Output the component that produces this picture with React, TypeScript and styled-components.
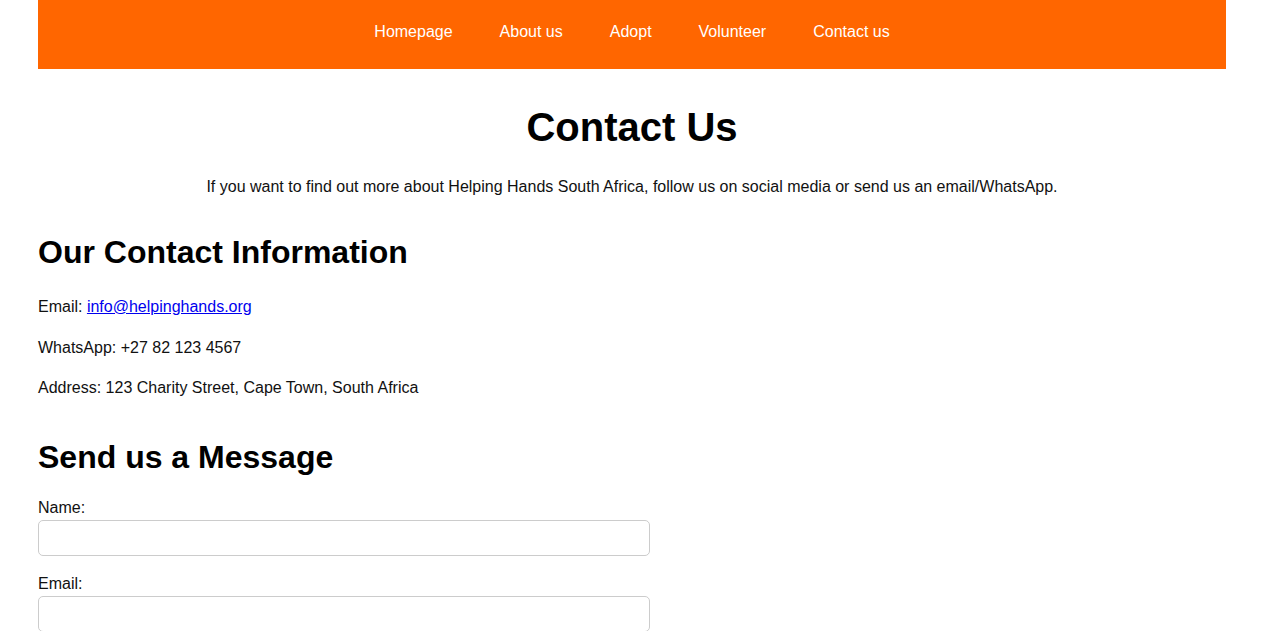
import React from 'react';
import styled, { createGlobalStyle } from 'styled-components';

const GlobalStyle = createGlobalStyle`
  html, body {
    margin: 0;
    padding: 0;
    background: #ffffff;
  }
  body {
    font-family: "Liberation Sans", Arial, Helvetica, sans-serif;
    color: #111;
  }
  * {
    box-sizing: border-box;
  }
`;

const navItems = ['Homepage', 'About us', 'Adopt', 'Volunteer', 'Contact us'];

function App() {
  return (
    <>
      <GlobalStyle />
      <Page>
        <NavBar>
          {navItems.map((item) => (
            <NavLink key={item} href="#">
              {item}
            </NavLink>
          ))}
        </NavBar>
        <Main>
          <Title>Contact Us</Title>
          <Intro>
            If you want to find out more about Helping Hands South Africa, follow us on social
            media or send us an email/WhatsApp.
          </Intro>

          <Section>
            <SectionHeading>Our Contact Information</SectionHeading>
            <InfoList>
              <InfoLine>
                Email: <MailLink href="#">info@helpinghands.org</MailLink>
              </InfoLine>
              <InfoLine>WhatsApp: +27 82 123 4567</InfoLine>
              <InfoLine>Address: 123 Charity Street, Cape Town, South Africa</InfoLine>
            </InfoList>
          </Section>

          <Section>
            <SectionHeading>Send us a Message</SectionHeading>
            <Form onSubmit={(e) => e.preventDefault()}>
              <Field>
                <Label htmlFor="name">Name:</Label>
                <Input id="name" type="text" />
              </Field>
              <Field>
                <Label htmlFor="email">Email:</Label>
                <Input id="email" type="email" />
              </Field>
            </Form>
          </Section>
        </Main>
      </Page>
    </>
  );
}

export default App;

const Page = styled.div`
  width: 1188px;
  margin-left: 38px;
`;

const NavBar = styled.nav`
  height: 69px;
  background: #ff6600;
  display: flex;
  flex-direction: row;
  justify-content: center;
  align-items: center;
  gap: 47px;
`;

const NavLink = styled.a`
  color: #ffffff;
  text-decoration: none;
  font-size: 16px;
  line-height: 20px;
  margin-top: -6px;
`;

const Main = styled.main`
  display: flex;
  flex-direction: column;
`;

const Title = styled.h1`
  margin: 34px 0 0;
  text-align: center;
  font-size: 40px;
  line-height: 48px;
  font-weight: bold;
  color: #000;
`;

const Intro = styled.p`
  margin: 23px 0 0;
  text-align: center;
  font-size: 16px;
  line-height: 25px;
`;

const Section = styled.section`
  display: flex;
  flex-direction: column;
  margin-top: 34px;

  & + & {
    margin-top: 37px;
  }
`;

const SectionHeading = styled.h2`
  margin: 0;
  font-size: 32px;
  line-height: 38px;
  font-weight: bold;
  color: #000;
`;

const InfoList = styled.div`
  display: flex;
  flex-direction: column;
  gap: 16px;
  margin-top: 24px;
`;

const InfoLine = styled.p`
  margin: 0;
  font-size: 16px;
  line-height: 24.5px;
`;

const MailLink = styled.a`
  color: #0000ee;
  text-decoration: underline;
`;

const Form = styled.form`
  display: flex;
  flex-direction: column;
  gap: 16px;
  margin-top: 20px;
`;

const Field = styled.div`
  display: flex;
  flex-direction: column;
`;

const Label = styled.label`
  font-size: 16px;
  line-height: 24px;
  color: #111;
`;

const Input = styled.input`
  width: 612px;
  height: 36px;
  padding: 8px 10px;
  border: 1px solid #cccccc;
  border-radius: 5px;
  font-size: 16px;
  font-family: inherit;
  background: #fff;
  outline: none;
`;
